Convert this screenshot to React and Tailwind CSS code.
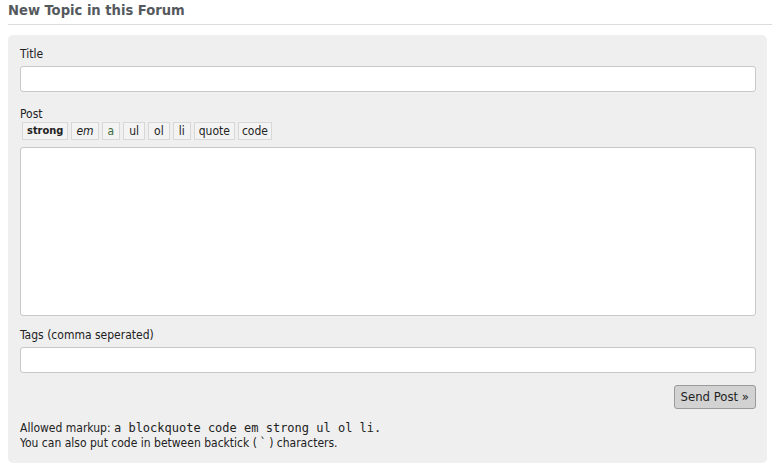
export default function App() {
  const btn = "border border-[#d8d8d8] bg-[#f3f3f3] px-[4px] h-[18px] leading-[16px] text-[12px] text-[#222]";
  return (
    <div className="bg-white w-[772px] h-[472px] pl-[8px] text-[#222]" style={{ fontFamily: "'DejaVu Sans Condensed', 'Liberation Sans', sans-serif" }}>
      <div className="border-b border-[#dcdcdc] h-[25px] pt-[1px]">
        <h2 className="text-[14.6px] font-bold text-[#55595e] leading-[18px]">New Topic in this Forum</h2>
      </div>
      <div className="mt-[10px] mr-[5px] bg-[#efefef] rounded-[5px] pl-[12px] pr-[11px] pt-[11px] h-[428px] text-[12px]">
        <div className="leading-[16px]">Title</div>
        <div className="mt-[4px] h-[26px] bg-white border border-[#c8c8c8] rounded-[3px]"></div>
        <div className="mt-[14px] leading-[16px]">Post</div>
        <div className="flex gap-[3px] pl-[2px] mt-[0px]">
          <span className={btn + " font-bold !text-[11px] !px-[4px]"}>strong</span>
          <span className={btn + " italic !px-[4px]"}>em</span>
          <span className={btn + " !text-[#3d6b3d] !px-[5px]"}>a</span>
          <span className={btn + " !px-[5px]"}>ul</span>
          <span className={btn + " !px-[5px]"}>ol</span>
          <span className={btn + " !px-[5px]"}>li</span>
          <span className={btn + " !px-[4px]"}>quote</span>
          <span className={btn + " !px-[3px]"}>code</span>
        </div>
        <div className="mt-[7px] h-[169px] bg-white border border-[#c8c8c8] rounded-[3px]"></div>
        <div className="mt-[11px] leading-[16px]">Tags (comma seperated)</div>
        <div className="mt-[4px] h-[26px] bg-white border border-[#c8c8c8] rounded-[3px]"></div>
        <div className="flex justify-end mt-[12px]">
          <button className="h-[24px] px-[6px] bg-[#d2d2d2] border border-[#9a9a9a] rounded-[3px] text-[13px] text-[#222] leading-[20px]">Send Post »</button>
        </div>
        <div className="mt-[12px] leading-[15px]">
          <div>Allowed markup: <span style={{ fontFamily: "'DejaVu Sans Mono', monospace" }} className="text-[12px]">a blockquote code em strong ul ol li.</span></div>
          <div>You can also put code in between backtick ( ` ) characters.</div>
        </div>
      </div>
    </div>
  );
}
